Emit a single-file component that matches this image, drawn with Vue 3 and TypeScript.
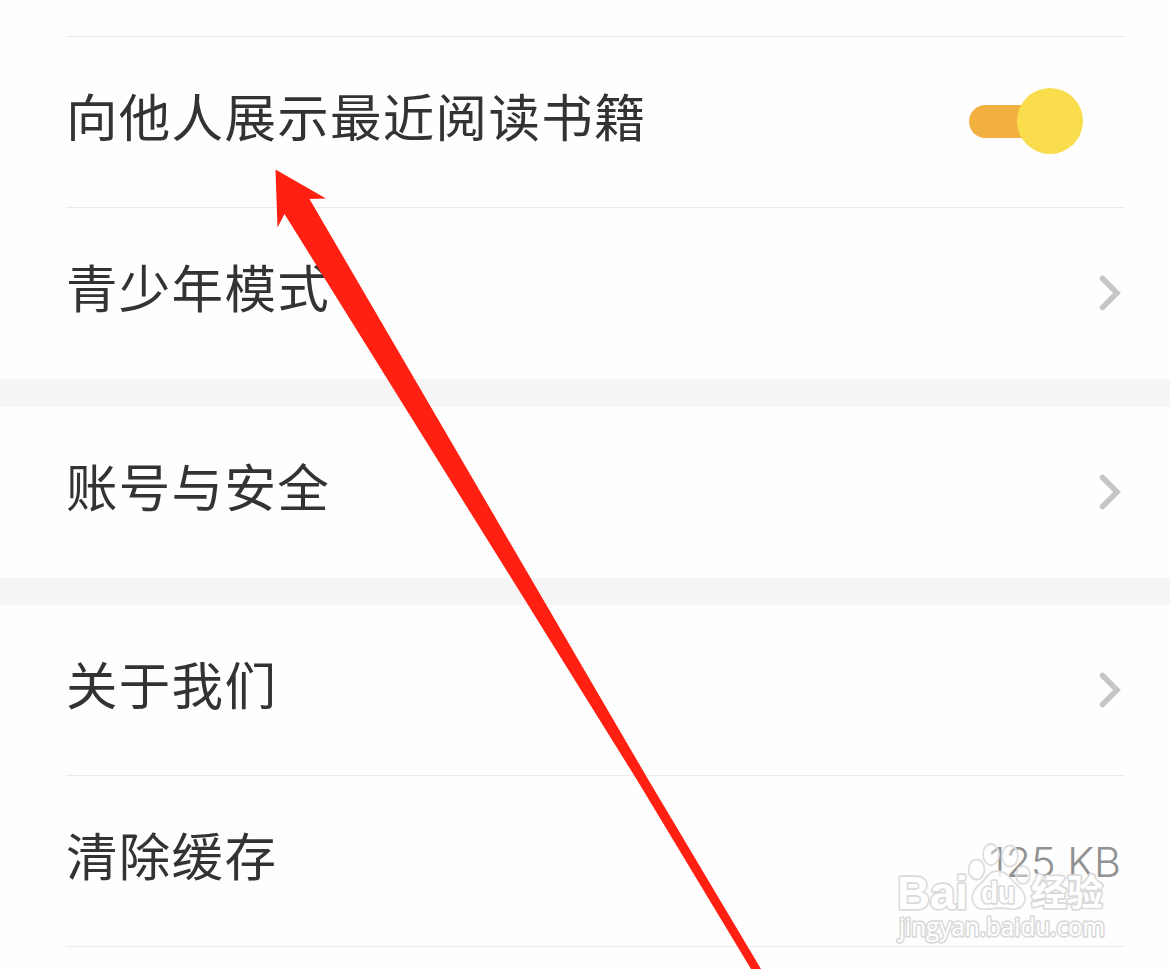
<script setup lang="ts">
interface Row {
  label: string
  kind: 'switch' | 'link' | 'value'
  value?: string
}

const groups: Row[][] = [
  [
    { label: '向他人展示最近阅读书籍', kind: 'switch' },
    { label: '青少年模式', kind: 'link' },
  ],
  [{ label: '账号与安全', kind: 'link' }],
  [
    { label: '关于我们', kind: 'link' },
    { label: '清除缓存', kind: 'value', value: '125 KB' },
  ],
]
</script>

<template>
  <main class="screen">
    <div class="previous"></div>
    <section v-for="(group, g) in groups" :key="g" class="group">
      <div v-for="row in group" :key="row.label" class="row">
        <span class="label">{{ row.label }}</span>
        <span v-if="row.kind === 'switch'" class="switch"><span class="knob"></span></span>
        <svg v-else-if="row.kind === 'link'" class="chevron" width="22" height="36" viewBox="0 0 22 36">
          <path d="M3.500 3.500 L18 18 L3.500 32.500" fill="none" stroke="#c6c6c6" stroke-width="5.500" stroke-linecap="round" />
        </svg>
        <span v-else class="value">{{ row.value }}</span>
      </div>
    </section>

    <svg class="overlay" width="1170" height="969" viewBox="0 0 1170 969">
      <g class="mark">
        <ellipse cx="976.500" cy="869.500" rx="8" ry="10" />
        <ellipse cx="991" cy="854.500" rx="8" ry="10.500" />
        <ellipse cx="1010" cy="856" rx="8" ry="10.500" />
        <ellipse cx="1023" cy="875" rx="7" ry="9" />
        <path class="pad" d="M997 871 C988 871 986 880 980 884 C973 890 970 898 974 904 C979 912 988 909 998 908 C1008 908 1016 912 1022 906 C1028 899 1024 891 1017 885 C1010 879 1007 871 997 871 Z" />
        <g class="words">
          <text x="897" y="909" class="brand" textLength="71" lengthAdjust="spacingAndGlyphs">Bai</text>
          <text x="981" y="903" class="du" textLength="34" lengthAdjust="spacingAndGlyphs">du</text>
          <text x="1031" y="906" class="cn" textLength="72" lengthAdjust="spacingAndGlyphs">经验</text>
          <text x="899" y="936" class="url" textLength="206" lengthAdjust="spacingAndGlyphs">jingyan.baidu.com</text>
        </g>
      </g>
      <path class="arrow" d="M275.500 169.500 L326 198.500 L309.500 199 L648.500 780 L761 969 L751 969 L637 780 L284.500 214 L277.500 227.500 Z" />
    </svg>
  </main>
</template>

<style>
body {
  margin: 0;
  background: #fefefe;
}
</style>

<style scoped>
.screen {
  position: relative;
  width: 1170px;
  height: 969px;
  overflow: hidden;
  background: #fefefe;
  font-family: "Noto Sans CJK SC", sans-serif;
}
.previous {
  height: 36px;
  margin: 0 45px 0 66px;
  border-bottom: 1px solid #ebebeb;
}
.group + .group {
  border-top: 28px solid #f5f5f5;
}
.group + .group + .group {
  border-top-width: 27px;
}
.row {
  display: flex;
  align-items: center;
  justify-content: space-between;
  box-sizing: border-box;
  height: 171px;
  margin: 0 45px 0 66px;
  border-bottom: 1px solid #ebebeb;
}
.group:not(:last-of-type) .row:last-child {
  border-bottom-color: transparent;
}
.label {
  padding-bottom: 14px;
  font-size: 51.500px;
  line-height: 74px;
  letter-spacing: 1.300px;
  color: #333;
  white-space: nowrap;
}
.switch {
  display: flex;
  align-items: center;
  justify-content: flex-end;
  width: 114px;
  height: 66px;
  margin: 0 42px 2px 0;
}
.switch::before {
  content: "";
  flex: none;
  width: 80px;
  height: 33px;
  margin-right: -32px;
  border-radius: 17px;
  background: #f2b040;
}
.knob {
  flex: none;
  width: 66px;
  height: 66px;
  border-radius: 50%;
  background: #f9dd4c;
}
.chevron {
  flex: none;
  margin-right: 4px;
}
.value {
  padding: 1px 4px 0 0;
  font-family: Inter, sans-serif;
  font-size: 41.500px;
  font-weight: 300;
  line-height: 52px;
  color: #929292;
}
.overlay {
  position: absolute;
  inset: 0;
}
.arrow {
  fill: #ff2012;
}
.mark {
  fill: #fff;
  fill-opacity: 0.350;
  stroke: #dedede;
  stroke-width: 1.800;
}
.pad {
  fill-opacity: 0.850;
}
.words {
  fill-opacity: 1;
  stroke: #dadada;
  stroke-width: 3.400;
  stroke-linejoin: round;
  paint-order: stroke;
}
.brand {
  font: 700 47px "Liberation Sans", sans-serif;
}
.du {
  font: 700 29px "Liberation Sans", sans-serif;
}
.cn {
  font: 700 36px "Noto Sans CJK SC", sans-serif;
}
.url {
  font: 400 25px "Open Sans", sans-serif;
}
</style>
